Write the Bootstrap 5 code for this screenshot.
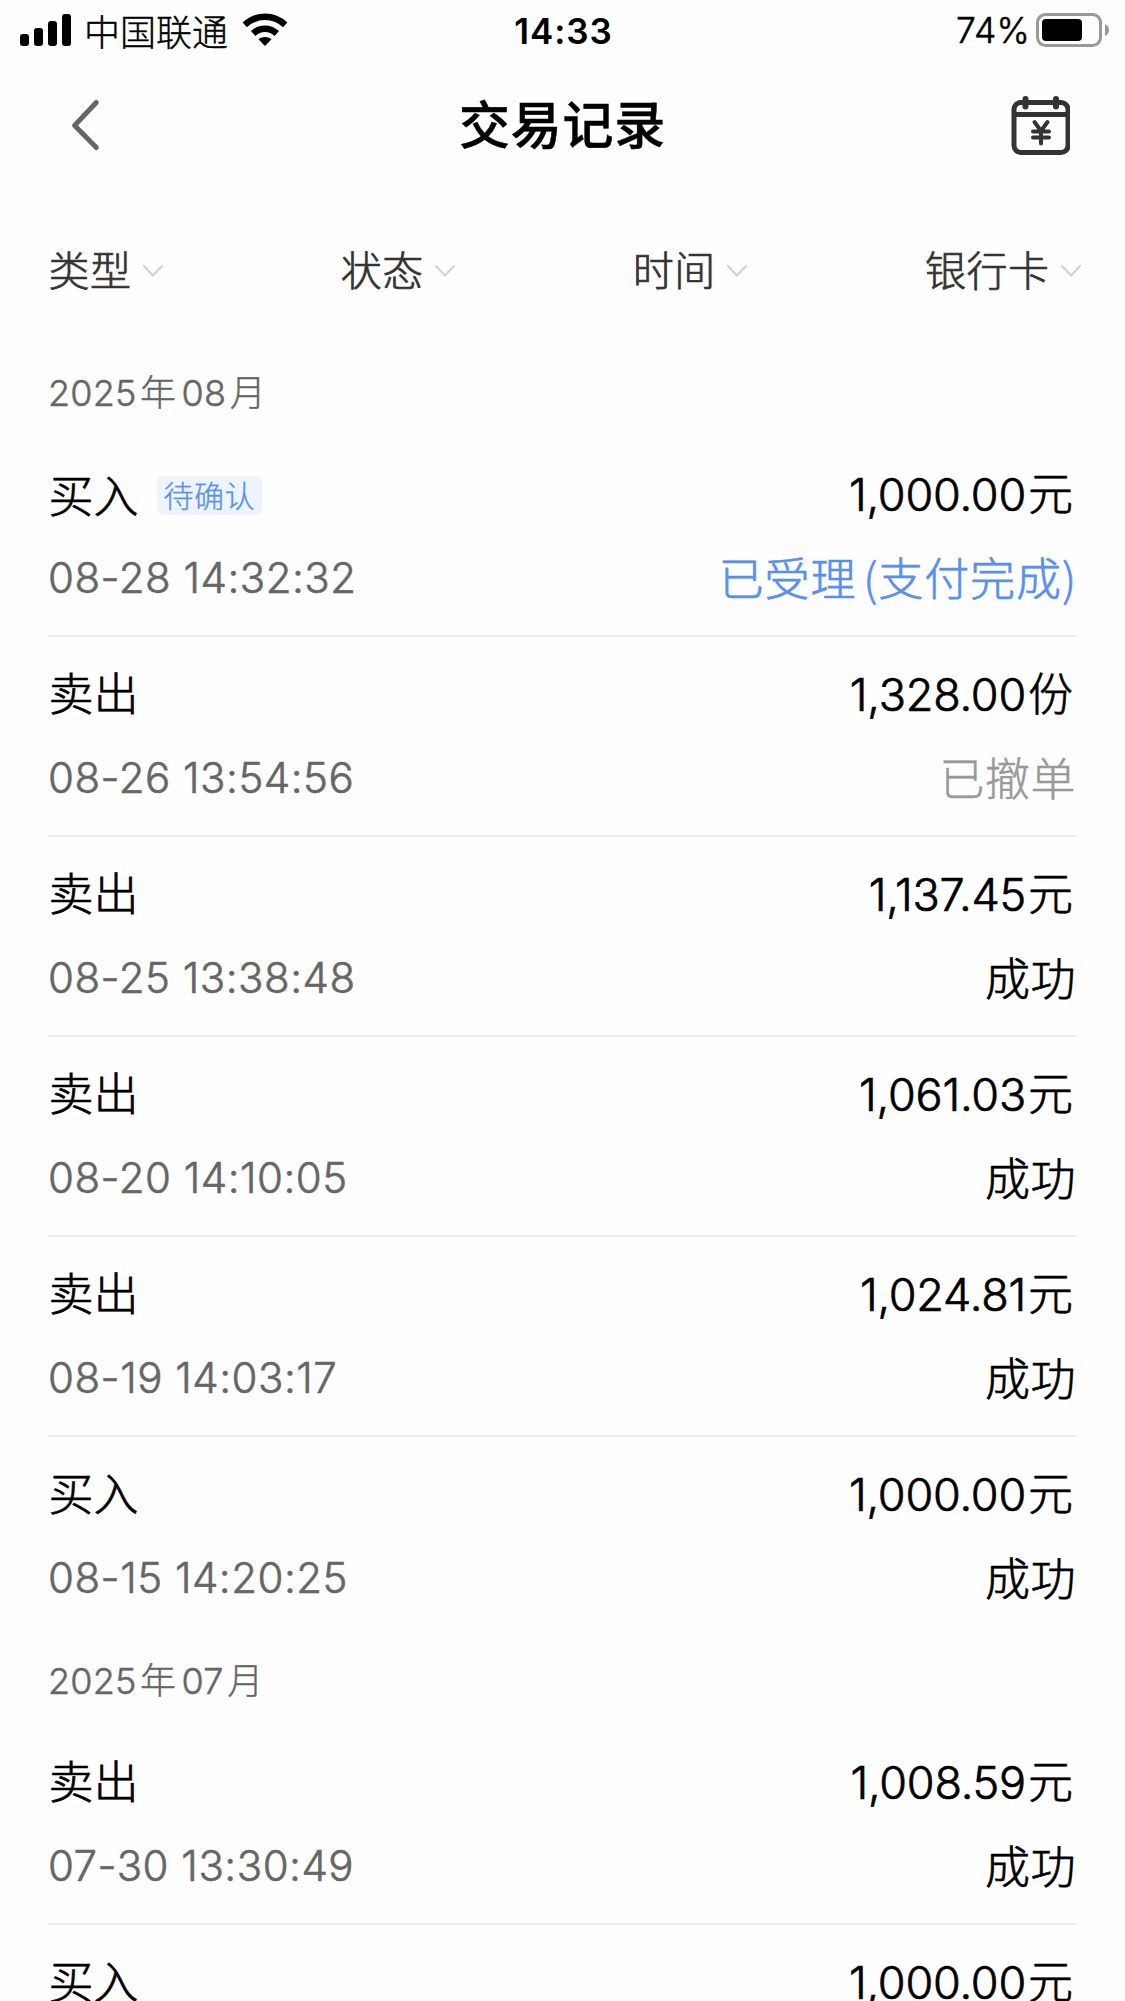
<!DOCTYPE html>
<html lang="zh-CN">
<head>
<meta charset="utf-8">
<meta name="viewport" content="width=device-width, initial-scale=1">
<title>交易记录</title>
<link href="https://cdn.jsdelivr.net/npm/bootstrap@5.3.0/dist/css/bootstrap.min.css" rel="stylesheet">
<style>
  body { font-family: Inter, "Noto Sans CJK SC", sans-serif; font-weight: 300; color: #000; background: #fefefe; height: 2001px; overflow: hidden; }
  svg { display: block; flex: none; }
  .zh { font-family: "Noto Sans CJK SC", sans-serif; font-weight: 300; letter-spacing: .5px; -webkit-text-stroke: .7px currentColor; }
  .status-bar { height: 60px; padding: 0 15px 0 20px; font-size: 36px; line-height: 60px; }
  .status-side { flex: 1 1 0; }
  .carrier { margin-left: 12px; margin-right: 14px; font-size: 36px; letter-spacing: 0; -webkit-text-stroke-width: .4px; }
  .clock { font-weight: 600; font-size: 35px; letter-spacing: .9px; padding-top: 2px; margin-right: 3px; }
  .battery-pct { font-size: 35.5px; margin-right: 6px; letter-spacing: .2px; padding-top: 2px; -webkit-text-stroke: .5px currentColor; }
  .title-bar { height: 130px; padding: 0 55px 0 71px; }
  .title-bar h1 { font: 500 51px/60px "Noto Sans CJK SC", sans-serif; letter-spacing: .7px; padding: 0 0 6px 14px; -webkit-text-stroke: .5px currentColor; }
  .filter-bar { height: 159px; padding: 0 43px 0 48.5px; font-size: 41px; line-height: 60px; color: #333; }
  .filter-bar > div { padding-bottom: 4px; }
  .filter-bar svg { margin: 6px 0 0 10.5px; }
  .month-head { height: 88px; padding: 0 48px; font-size: 36px; line-height: 82px; color: #666; letter-spacing: .2px; -webkit-text-stroke: .5px currentColor; }
  .month-head .zh { margin: 0 5px 0 3.5px; -webkit-text-stroke-width: .4px; }
  .records { padding: 0 48px; }
  .record { height: 200px; padding-top: 23px; font-size: 45px; line-height: 64px; border-bottom: 2px solid #ececec; }
  .record:last-child { border-color: transparent; }
  .record-line + .record-line { margin-top: 18px; }
  .kind { letter-spacing: 0; padding-left: .5px; }
  .amount { letter-spacing: -.2px; padding-right: 4px; -webkit-text-stroke: .7px currentColor; }
  .amount .zh { margin-left: 2px; letter-spacing: 0; }
  .stamp { font-size: 42px; color: #666; letter-spacing: .5px; padding-top: 2px; line-height: 62px; -webkit-text-stroke: .6px currentColor; }
  .state { padding-right: 1px; }
  .pending { height: 39px; padding: 0 7px; margin: 4px 0 0 18px; border-radius: 6px; background: #edf4fe; color: #5890ec; font-size: 30px; line-height: 36px; -webkit-text-stroke-width: .3px; }
  .accepted { color: #5890ec; letter-spacing: .9px; word-spacing: -4px; padding-right: 0; }
  .cancelled { color: #999; -webkit-text-stroke-width: .5px; }
</style>
</head>
<body>
<header>
  <div class="status-bar d-flex align-items-center">
    <div class="status-side d-flex align-items-center">
      <svg width="52" height="32" viewBox="0 0 52 32"><rect y="20" width="9" height="12" rx="3"/><rect x="14" y="14" width="9" height="18" rx="3"/><rect x="28" y="7" width="9" height="25" rx="3"/><rect x="42" width="9" height="32" rx="3"/></svg>
      <span class="carrier zh">中国联通</span>
      <svg width="46" height="34" viewBox="0 0 46 34"><g fill="none" stroke="#000" stroke-width="6.5"><path d="M2.8 11.8C14.5 1 31.5 1 43.2 11.8"/><path d="M11.2 20.5C18 14.2 28 14.2 34.8 20.5"/></g><path d="M16.5 26.3c3.8-3.2 9.2-3.2 13 0L23 33z"/></svg>
    </div>
    <span class="clock">14:33</span>
    <div class="status-side d-flex align-items-center justify-content-end">
      <span class="battery-pct">74%</span>
      <svg width="74" height="34" viewBox="0 0 74 34"><rect x="1.5" y="1.5" width="63" height="31" rx="8" fill="none" stroke="#999" stroke-width="3"/><rect x="6" y="6" width="40" height="22" rx="4"/><path d="M69 11q4 2 4 6t-4 6z" fill="#999"/></svg>
    </div>
  </div>
  <div class="title-bar d-flex align-items-center justify-content-between">
    <svg width="30" height="54" viewBox="0 0 30 54"><path d="M25.3 4.500 3.600 27.500 25.300 49.500" fill="none" stroke="#666" stroke-width="5" stroke-linecap="round" stroke-linejoin="round"/></svg>
    <h1 class="m-0">交易记录</h1>
    <svg width="60" height="62" viewBox="0 0 60 62" fill="none" stroke="#333" stroke-width="5"><rect x="4" y="8.500" width="54" height="50" rx="7"/><path d="M4 20.500h54"/><path d="M15.500 5v7.500M46 5v7.500" stroke-width="6" stroke-linecap="round"/><path d="m24.500 28 6.500 9 6.500-9M31 37v12.500M23 37.500h16M23 43.500h16" stroke-width="4" stroke-linecap="round"/></svg>
  </div>
</header>
<nav class="filter-bar d-flex align-items-center justify-content-between zh">
  <div class="d-flex align-items-center">类型<svg width="22" height="14" viewBox="0 0 22 14"><path d="m2 2 9 9.500L20 2" fill="none" stroke="#d2d2d2" stroke-width="2.200" stroke-linecap="round"/></svg></div>
  <div class="d-flex align-items-center">状态<svg width="22" height="14" viewBox="0 0 22 14"><path d="m2 2 9 9.500L20 2" fill="none" stroke="#d2d2d2" stroke-width="2.200" stroke-linecap="round"/></svg></div>
  <div class="d-flex align-items-center">时间<svg width="22" height="14" viewBox="0 0 22 14"><path d="m2 2 9 9.500L20 2" fill="none" stroke="#d2d2d2" stroke-width="2.200" stroke-linecap="round"/></svg></div>
  <div class="d-flex align-items-center">银行卡<svg width="22" height="14" viewBox="0 0 22 14"><path d="m2 2 9 9.500L20 2" fill="none" stroke="#d2d2d2" stroke-width="2.200" stroke-linecap="round"/></svg></div>
</nav>
<main>
  <div class="month-head">2025<span class="zh">年</span>08<span class="zh">月</span></div>
  <section class="records">
    <article class="record">
      <div class="record-line d-flex align-items-center"><span class="kind zh">买入</span><span class="pending zh">待确认</span><span class="amount ms-auto">1,000.00<span class="zh">元</span></span></div>
      <div class="record-line d-flex justify-content-between"><span class="stamp">08-28 14:32:32</span><span class="state accepted zh">已受理 (支付完成)</span></div>
    </article>
    <article class="record">
      <div class="record-line d-flex justify-content-between"><span class="kind zh">卖出</span><span class="amount">1,328.00<span class="zh">份</span></span></div>
      <div class="record-line d-flex justify-content-between"><span class="stamp">08-26 13:54:56</span><span class="state cancelled zh">已撤单</span></div>
    </article>
    <article class="record">
      <div class="record-line d-flex justify-content-between"><span class="kind zh">卖出</span><span class="amount">1,137.45<span class="zh">元</span></span></div>
      <div class="record-line d-flex justify-content-between"><span class="stamp">08-25 13:38:48</span><span class="state zh">成功</span></div>
    </article>
    <article class="record">
      <div class="record-line d-flex justify-content-between"><span class="kind zh">卖出</span><span class="amount">1,061.03<span class="zh">元</span></span></div>
      <div class="record-line d-flex justify-content-between"><span class="stamp">08-20 14:10:05</span><span class="state zh">成功</span></div>
    </article>
    <article class="record">
      <div class="record-line d-flex justify-content-between"><span class="kind zh">卖出</span><span class="amount">1,024.81<span class="zh">元</span></span></div>
      <div class="record-line d-flex justify-content-between"><span class="stamp">08-19 14:03:17</span><span class="state zh">成功</span></div>
    </article>
    <article class="record">
      <div class="record-line d-flex justify-content-between"><span class="kind zh">买入</span><span class="amount">1,000.00<span class="zh">元</span></span></div>
      <div class="record-line d-flex justify-content-between"><span class="stamp">08-15 14:20:25</span><span class="state zh">成功</span></div>
    </article>
  </section>
  <div class="month-head">2025<span class="zh">年</span>07<span class="zh">月</span></div>
  <section class="records">
    <article class="record">
      <div class="record-line d-flex justify-content-between"><span class="kind zh">卖出</span><span class="amount">1,008.59<span class="zh">元</span></span></div>
      <div class="record-line d-flex justify-content-between"><span class="stamp">07-30 13:30:49</span><span class="state zh">成功</span></div>
    </article>
    <article class="record">
      <div class="record-line d-flex justify-content-between"><span class="kind zh">买入</span><span class="amount">1,000.00<span class="zh">元</span></span></div>
    </article>
  </section>
</main>
<script src="https://cdn.jsdelivr.net/npm/bootstrap@5.3.0/dist/js/bootstrap.bundle.min.js"></script>
</body>
</html>
